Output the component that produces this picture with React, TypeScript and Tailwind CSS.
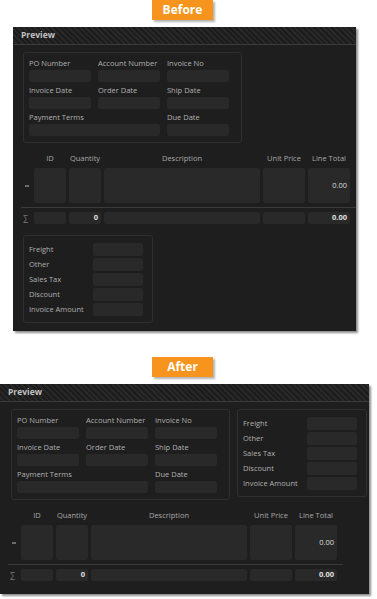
import type { ReactNode } from "react";

const fieldRows = [
  ["PO Number", "Account Number", "Invoice No"],
  ["Invoice Date", "Order Date", "Ship Date"],
];

const totals = ["Freight", "Other", "Sales Tax", "Discount", "Invoice Amount"];

function Input({ className = "" }: { className?: string }) {
  return <div className={`rounded-[2px] bg-[#292929] ${className}`} />;
}

function Field({ label, wide }: { label: string; wide?: boolean }) {
  return (
    <div className={`flex flex-col gap-[1px] ${wide ? "col-span-2" : ""}`}>
      <div className="h-[11px] whitespace-nowrap text-[7.5px] leading-[11px] text-[#b0b0b0]">
        {label}
      </div>
      <Input className="h-[12px]" />
    </div>
  );
}

function GroupBox({ className = "", children }: { className?: string; children: ReactNode }) {
  return (
    <div className={`rounded-[3px] border border-[#2f2f2f] ${className}`}>{children}</div>
  );
}

function HeaderBox() {
  return (
    <GroupBox className="w-[219px] shrink-0 pb-[6px] pl-[5px] pr-[14px] pt-[5px]">
      <div className="grid grid-cols-[62px_62px_62px] gap-x-[7px] gap-y-[3px]">
        {fieldRows.flat().map((l) => (
          <Field key={l} label={l} />
        ))}
        <Field label="Payment Terms" wide />
        <Field label="Due Date" />
      </div>
    </GroupBox>
  );
}

function TotalsBox() {
  return (
    <GroupBox className="w-[130px] shrink-0 pb-[6px] pl-[5px] pr-[9px] pt-[7px]">
      <div className="flex flex-col gap-[2px]">
        {totals.map((t) => (
          <div key={t} className="flex h-[13px] items-center">
            <div className="w-[64px] whitespace-nowrap text-[7.5px] text-[#b0b0b0]">{t}</div>
            <Input className="h-[13px] flex-1" />
          </div>
        ))}
      </div>
    </GroupBox>
  );
}

function LineTable() {
  const cols = "grid grid-cols-[10px_32px_32px_156px_42px_42px] gap-x-[3px]";
  return (
    <div className="mt-[10px] flex flex-col">
      <div
        className={`${cols} h-[10px] items-center whitespace-nowrap text-center text-[7.5px] leading-[10px] text-[#a8a8a8]`}
      >
        <div />
        <div>ID</div>
        <div>Quantity</div>
        <div>Description</div>
        <div>Unit Price</div>
        <div>Line Total</div>
      </div>
      <div className={`${cols} mt-[5px] h-[35px]`}>
        <div className="flex items-center pl-[4px]">
          <div className="h-[2px] w-[4px] bg-[#6a6a6a]" />
        </div>
        <Input />
        <Input />
        <Input />
        <Input />
        <div className="flex items-center justify-end rounded-[2px] bg-[#292929] pr-[3px] text-[7.5px] text-[#dcdcdc]">
          0.00
        </div>
      </div>
      <div className="mt-[4px] h-px w-[335px] bg-[#3a3a3a]" />
      <div className={`${cols} mt-[4px] h-[12px]`}>
        <div className="flex items-center pl-[2px] text-[8px] leading-none text-[#7a7a7a]">∑</div>
        <Input />
        <div className="flex items-center justify-end rounded-[2px] bg-[#292929] pr-[3px] text-[7.5px] font-bold text-[#e0e0e0]">
          0
        </div>
        <Input />
        <Input />
        <div className="flex items-center justify-end rounded-[2px] bg-[#292929] pr-[3px] text-[7.5px] font-bold text-[#e0e0e0]">
          0.00
        </div>
      </div>
    </div>
  );
}

function Panel({ after }: { after?: boolean }) {
  return (
    <div
      className={`mt-[7px] flex flex-col bg-[#1e1e1e] shadow-[2px_2px_2px_rgba(0,0,0,0.45)] ${
        after ? "w-[369px] pb-[13px]" : "ml-[13px] w-[343px] pb-[8px]"
      }`}
    >
      <div className="flex h-[18px] items-center border-b border-[#3b3b3b] bg-[repeating-linear-gradient(45deg,#1c1c1c_0px,#1c1c1c_2px,#282828_2px,#282828_4px)] px-2 text-[8.5px] font-bold text-[#c0c0c0]">
        Preview
      </div>
      <div className="flex flex-col px-2">
        {after ? (
          <>
            <div className="ml-[3px] mt-[7px] flex items-start gap-[7px]">
              <HeaderBox />
              <TotalsBox />
            </div>
            <LineTable />
          </>
        ) : (
          <>
            <div className="ml-[2px] mt-[7px]">
              <HeaderBox />
            </div>
            <LineTable />
            <div className="ml-[2px] mt-[11px]">
              <TotalsBox />
            </div>
          </>
        )}
      </div>
    </div>
  );
}

function Badge({ children }: { children: ReactNode }) {
  return (
    <div className="ml-[152px] flex h-[20px] w-[61px] items-center justify-center bg-[#f7941d] text-[12px] font-bold text-white shadow-[2px_2px_2px_rgba(0,0,0,0.3)]">
      {children}
    </div>
  );
}

export default function App() {
  return (
    <div className="flex min-h-screen w-full flex-col bg-white font-['Open_Sans','Liberation_Sans',sans-serif]">
      <Badge>Before</Badge>
      <Panel />
      <div className="mt-[26px]">
        <Badge>After</Badge>
      </div>
      <Panel after />
    </div>
  );
}
